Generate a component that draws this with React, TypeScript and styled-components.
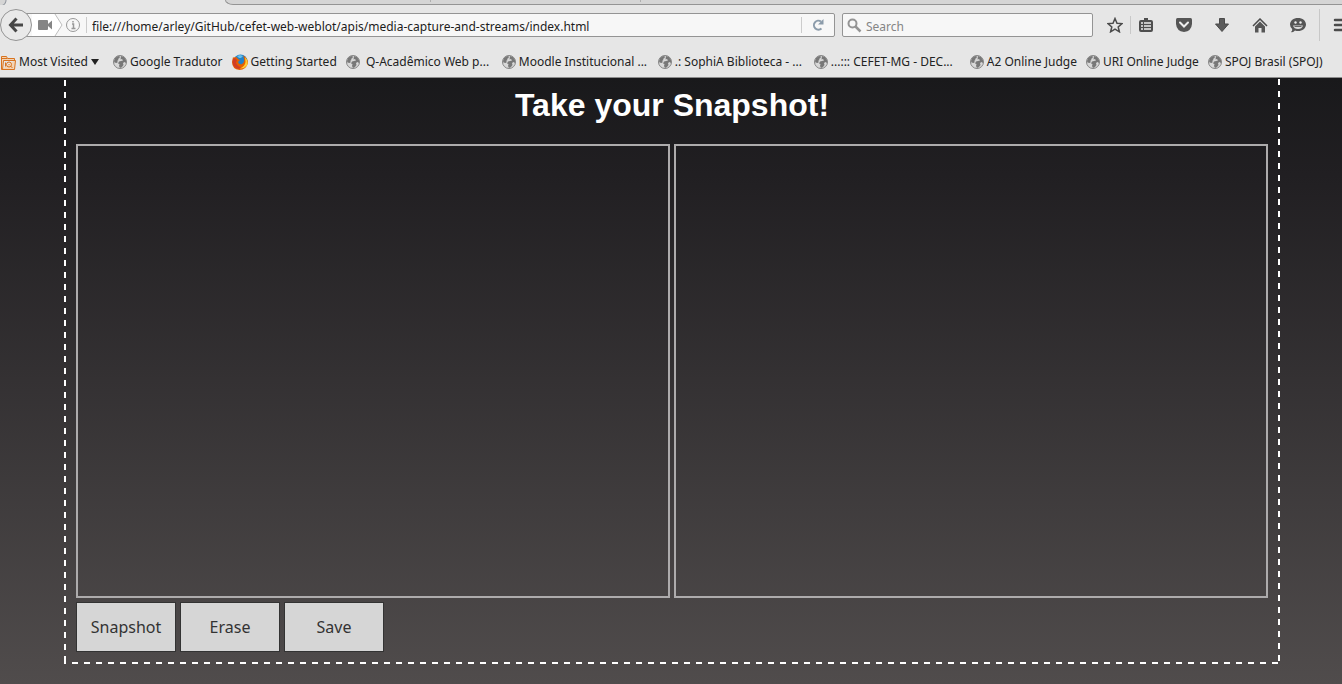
import React from "react";
import styled, { createGlobalStyle } from "styled-components";

const GlobalStyle = createGlobalStyle`
  *, *::before, *::after { box-sizing: border-box; }
  html, body { margin: 0; padding: 0; }
  body { font-family: "Noto Sans", sans-serif; font-size: 12px; color: #222; }
  svg { display: block; flex: none; }
`;

const Shell = styled.div`
  display: flex;
  flex-direction: column;
  min-height: 100vh;
  overflow: hidden;
`;

const Chrome = styled.header`
  flex: none;
  background: #e6e6e6;
  border-bottom: 1px solid #8c8c8c;
`;

const TabStrip = styled.div`
  display: flex;
  height: 5px;
  overflow: hidden;
`;

const CurrentTab = styled.div`
  flex: none;
  width: 225px;
  background: radial-gradient(circle at 0 0, #d5d5d5 5px, #8f949c 6px, transparent 7px);
`;

const OtherTabs = styled.div`
  flex: 1;
  display: flex;
  background: #d5d5d5;
  border-bottom: 1px solid #949494;
  border-left: 1px solid #949494;
  border-bottom-left-radius: 8px 5px;
`;

const TabSlot = styled.div<{ $width: number }>`
  flex: none;
  width: ${(p) => p.$width}px;
  height: 2px;
  border-right: 1px solid #b0b0b0;
`;

const NavBar = styled.div`
  display: flex;
  align-items: center;
  height: 40px;
`;

const BackButton = styled.button`
  flex: none;
  display: grid;
  place-items: center;
  width: 32px;
  height: 32px;
  padding: 0;
  border: 1px solid #949494;
  border-radius: 50%;
  background: #e9e9e9;
  z-index: 1;
`;

const AddressBar = styled.div`
  flex: 1;
  display: flex;
  align-items: center;
  min-width: 0;
  height: 24px;
  margin-left: -16px;
  padding-left: 15px;
  border: 1px solid #949494;
  border-radius: 2px;
  background: #f7f7f7;
  overflow: hidden;
`;

const SiteIdentity = styled.div`
  flex: none;
  display: flex;
  align-items: center;
  width: 60px;
  height: 22px;
`;

const AddressInput = styled.input`
  flex: 1;
  min-width: 0;
  height: 18px;
  padding: 2px 0 0;
  border: 0;
  outline: 0;
  background: transparent;
  font: 12px/16px "Noto Sans", sans-serif;
  color: #1c1c1c;
`;

const ReloadButton = styled.button`
  flex: none;
  display: grid;
  place-items: center;
  width: 33px;
  height: 16px;
  padding: 0;
  border: 0;
  border-left: 1px solid #ccc;
  background: transparent;
`;

const SearchBox = styled.label`
  flex: none;
  display: flex;
  align-items: center;
  gap: 4px;
  width: 251px;
  height: 24px;
  margin-left: 7px;
  padding: 0 4px;
  border: 1px solid #949494;
  border-radius: 2px;
  background: #f7f7f7;
`;

const SearchInput = styled(AddressInput)`
  &::placeholder { color: #858585; opacity: 1; }
`;

const Tools = styled.div`
  flex: none;
  display: flex;
  align-items: center;
  width: 249px;
  padding-left: 12px;
  overflow: hidden;
`;

const ToolButton = styled.button<{ $width: number }>`
  flex: none;
  display: grid;
  place-items: center;
  width: ${(p) => p.$width}px;
  height: 24px;
  padding: 0;
  border: 0;
  background: transparent;
`;

const ToolDivider = styled.span<{ $height: number; $space: number }>`
  flex: none;
  width: 1px;
  height: ${(p) => p.$height}px;
  margin: 0 ${(p) => p.$space}px;
  background: #c8c8c8;
`;

const Bookmarks = styled.nav`
  display: flex;
  gap: 9px;
  height: 32px;
  padding: 2px 0 0 1px;
  align-items: center;
  white-space: pre;
`;

const Bookmark = styled.a<{ $long?: boolean }>`
  flex: none;
  display: flex;
  align-items: center;
  gap: 3px;
  width: ${(p) => (p.$long ? "147px" : "auto")};
  line-height: 16px;
  color: #222;
  text-decoration: none;
`;

const MostVisited = styled.button`
  flex: none;
  display: flex;
  align-items: center;
  gap: 3px;
  width: 103px;
  padding: 0;
  border: 0;
  background: transparent;
  font: 12px/16px "Noto Sans", sans-serif;
  color: #222;
`;

const Page = styled.main`
  flex: 1;
  padding: 0 62px 20px 64px;
  background: linear-gradient(#19191b, #211f22 16%, #504c4c);
`;

const dash = "#fff 6px, transparent 6px";

const Frame = styled.section`
  padding: 0 12px 12px;
  background:
    linear-gradient(to right, ${dash}) 8px 100% / 12px 2px repeat-x,
    linear-gradient(to bottom, ${dash}) 0 2px / 2px 12px repeat-y,
    linear-gradient(to bottom, ${dash}) 100% 1px / 2px 12px repeat-y;
`;

const Title = styled.h1`
  margin: 0;
  padding: 8px 0 20px;
  font: bold 32px/38px "Liberation Sans", Arial, sans-serif;
  text-align: center;
  color: #fff;
`;

const Views = styled.div`
  display: flex;
  gap: 4px;
`;

const View = styled.div`
  flex: 1;
  height: 454px;
  border: 2px solid #adabac;
`;

const Actions = styled.div`
  display: flex;
  gap: 4px;
  padding-top: 4px;
`;

const ActionButton = styled.button`
  width: 100px;
  height: 50px;
  padding: 0;
  border: 1px solid #333;
  background: #d6d6d6;
  font: 16px/22px "Noto Sans", sans-serif;
  color: #333;
`;

const Globe = () => (
  <svg width="14" height="14" viewBox="0 0 14 14" aria-hidden="true">
    <circle cx="7" cy="7" r="6.5" fill="#d8d8d8" stroke="#858585" />
    <path d="M1 6 2 3 5 1 7 1.500 6.500 3 5 4 5.500 5 4 6 5 7 3.500 8 1.500 7.500ZM8 1 11 2 13 5 13 8 11.500 7 10 8 10.500 10 9 12 7 13 6 11 6.500 9 5 8.500 6 6.500 8 6 10 5.500 9 4 7.500 4.500Z" fill="#787878" />
  </svg>
);

const FirefoxIcon = () => (
  <svg width="16" height="16" viewBox="0 0 16 16" aria-hidden="true">
    <circle cx="8.5" cy="7.5" r="7" fill="#2482c8" />
    <path d="M5 2 8 1 11 2 9 4 7 4Z" fill="#65bfe9" />
    <path d="M1 3Q1.500 4 3 3L5 3.500 6 5 8 6 6 8Q7 11 10 10Q13 8 12 4L11 1.500Q16 4 16 9Q14 16 7.500 16Q0 15 0 8Z" fill="#e66000" />
    <path d="M13 3Q17 7 15 11.500Q12 15 8 14.500Q13 12 13.500 8Z" fill="#ffcc32" />
    <path d="M1 5 3 4 5 6 4 9Q6 13 9 13L7 15Q1 14 .500 8Z" fill="#d13e24" />
  </svg>
);

const FolderIcon = () => (
  <svg width="15" height="15" viewBox="0 0 15 15" fill="none" stroke="#d8731f" aria-hidden="true">
    <path d="M.5 14.500V1.500h5l1 2h7v2M.5 14.500h13l1-9h-12l-1 9" fill="#f3d4b5" />
    <path d="M1 3.500h5" />
    <circle cx="8" cy="9.500" r="2.500" />
    <path d="m9.500 11 2 2M8 9v1M4.500 7.500v4" />
  </svg>
);

const bookmarks: { title: string; long?: boolean; firefox?: boolean }[] = [
  { title: "Google Tradutor" },
  { title: "Getting Started", firefox: true },
  { title: " Q-Acadêmico Web p...", long: true },
  { title: "Moodle Institucional ...", long: true },
  { title: ".: SophiA Biblioteca - ...", long: true },
  { title: "...::: CEFET-MG - DEC...", long: true },
  { title: "A2 Online Judge" },
  { title: "URI Online Judge" },
  { title: "SPOJ Brasil (SPOJ)" },
];

export default function App() {
  return (
    <Shell>
      <GlobalStyle />
      <Chrome>
        <TabStrip>
          <CurrentTab />
          <OtherTabs>
            <TabSlot $width={205} />
            <TabSlot $width={210} />
          </OtherTabs>
        </TabStrip>
        <NavBar>
          <BackButton aria-label="Back">
            <svg width="16" height="16" viewBox="0 0 16 16" fill="none" stroke="#474747" strokeWidth="3" aria-hidden="true">
              <path d="M8.500 1.500 2.500 8l6 6.500M3 8h12" />
            </svg>
          </BackButton>
          <AddressBar>
            <SiteIdentity>
              <svg width="60" height="22" viewBox="0 0 60 22" aria-hidden="true">
                <path d="M0 0H23L30 11 23 22H0Z" fill="#fff" />
                <path d="M23 0 30 11 23 22" fill="none" stroke="#bdbdbd" />
                <rect x="6" y="6" width="10" height="10" rx="1" fill="#858585" />
                <path d="M16 10 20 6.500V15.500L16 12Z" fill="#858585" />
                <circle cx="41" cy="11" r="6.500" fill="none" stroke="#999" />
                <path d="M40 10h1.500v4M39.500 14.500h4M41 7v1.500" fill="none" stroke="#999" strokeWidth="1.500" />
                <path d="M54.500 3V19" stroke="#ccc" />
              </svg>
            </SiteIdentity>
            <AddressInput
              aria-label="Address"
              defaultValue="file:///home/arley/GitHub/cefet-web-weblot/apis/media-capture-and-streams/index.html"
            />
            <ReloadButton aria-label="Reload">
              <svg width="12" height="12" viewBox="0 0 12 12" aria-hidden="true">
                <path d="M9 2.500A4.500 4.500 0 1 0 9.500 9.500" fill="none" stroke="#8b9baa" strokeWidth="2" />
                <path d="M11.500 0V5.500H6Z" fill="#8b9baa" />
              </svg>
            </ReloadButton>
          </AddressBar>
          <SearchBox>
            <svg width="15" height="15" viewBox="0 0 15 15" fill="none" stroke="#949494" aria-hidden="true">
              <circle cx="5.500" cy="5.500" r="4" strokeWidth="2" />
              <path d="m8.500 8.500 5 5" strokeWidth="2.500" />
            </svg>
            <SearchInput aria-label="Search" placeholder="Search" />
          </SearchBox>
          <Tools>
            <ToolButton $width={20} aria-label="Bookmark this page">
              <svg width="16" height="16" viewBox="0 0 16 16" fill="none" stroke="#4c4c4c" strokeWidth="1.500" aria-hidden="true">
                <path d="m8 1.500 2 4.700 5 .4-3.800 3.300 1.200 4.900L8 12.200l-4.400 2.600 1.200-4.900L1 6.600l5-.4Z" />
              </svg>
            </ToolButton>
            <ToolDivider $height={18} $space={5} />
            <ToolButton $width={20} aria-label="Show your bookmarks">
              <svg width="14" height="16" viewBox="0 0 14 16" aria-hidden="true">
                <path d="M5 3V1h4v2h3q2 0 2 2v8q0 2-2 2H2q-2 0-2-2V5q0-2 2-2Z" fill="#4f4f4f" />
                <path d="M2 6h2M5 6h7M2 9h2M5 9h7M2 12h2M5 12h7" stroke="#eee" strokeWidth="1.500" />
              </svg>
            </ToolButton>
            <ToolButton $width={56} aria-label="Save to Pocket">
              <svg width="16" height="14" viewBox="0 0 16 14" aria-hidden="true">
                <path d="M1.500 0h13Q16 0 16 1.500V6Q15.500 13 8 14 .500 13 0 6V1.500Q0 0 1.500 0Z" fill="#555" />
                <path d="m4 4.500 4 4 4-4" fill="none" stroke="#eee" strokeWidth="2" strokeLinecap="round" />
              </svg>
            </ToolButton>
            <ToolButton $width={20} aria-label="Downloads">
              <svg width="14" height="14" viewBox="0 0 14 14" aria-hidden="true">
                <path d="M4.500 .500h5V6H13.500L7 13.500.500 6h4Z" fill="#5c5c5c" stroke="#4b4b4b" />
              </svg>
            </ToolButton>
            <ToolButton $width={56} aria-label="Home">
              <svg width="16" height="15" viewBox="0 0 16 15" aria-hidden="true">
                <path d="m1 8 7-7 7 7" fill="none" stroke="#4b4b4b" strokeWidth="1.500" />
                <path d="M3 8.500 8 3.500l5 5V14.500H9.500V10h-3v4.500H3Z" fill="#565656" />
              </svg>
            </ToolButton>
            <ToolButton $width={20} aria-label="Start a conversation">
              <svg width="16" height="15" viewBox="0 0 16 15" aria-hidden="true">
                <path d="M8 0C12.500 0 16 2.700 16 6.500S12.500 13 8 13Q6.500 13 5 12.500 3 15 1 14q1.500-1 1.200-3Q0 9 0 6.500C0 2.700 3.500 0 8 0Z" fill="#555" />
                <circle cx="5.500" cy="4.500" r="1.200" fill="#eee" />
                <circle cx="10.500" cy="4.500" r="1.200" fill="#eee" />
                <path d="M3 7.500h10Q12 11 8 11T3 7.500Z" fill="#ddd" />
                <path d="M4.500 8.500h7" stroke="#666" />
              </svg>
            </ToolButton>
            <ToolDivider $height={32} $space={11} />
            <ToolButton $width={20} aria-label="Open menu">
              <svg width="16" height="14" viewBox="0 0 16 14" aria-hidden="true">
                <path d="M2 2h14M2 7h14M2 12h14" stroke="#4b4b4b" strokeWidth="2.500" strokeLinecap="round" />
              </svg>
            </ToolButton>
          </Tools>
        </NavBar>
        <Bookmarks aria-label="Bookmarks">
          <MostVisited>
            <FolderIcon />
            Most Visited
            <svg width="8" height="6" viewBox="0 0 8 6" aria-hidden="true">
              <path d="M0 0h8L4 6Z" fill="#222" />
            </svg>
          </MostVisited>
          {bookmarks.map((b) => (
            <Bookmark key={b.title} href="#" $long={b.long}>
              {b.firefox ? <FirefoxIcon /> : <Globe />}
              <span>{b.title}</span>
            </Bookmark>
          ))}
        </Bookmarks>
      </Chrome>
      <Page>
        <Frame>
          <Title>Take your Snapshot!</Title>
          <Views>
            <View />
            <View />
          </Views>
          <Actions>
            <ActionButton>Snapshot</ActionButton>
            <ActionButton>Erase</ActionButton>
            <ActionButton>Save</ActionButton>
          </Actions>
        </Frame>
      </Page>
    </Shell>
  );
}
